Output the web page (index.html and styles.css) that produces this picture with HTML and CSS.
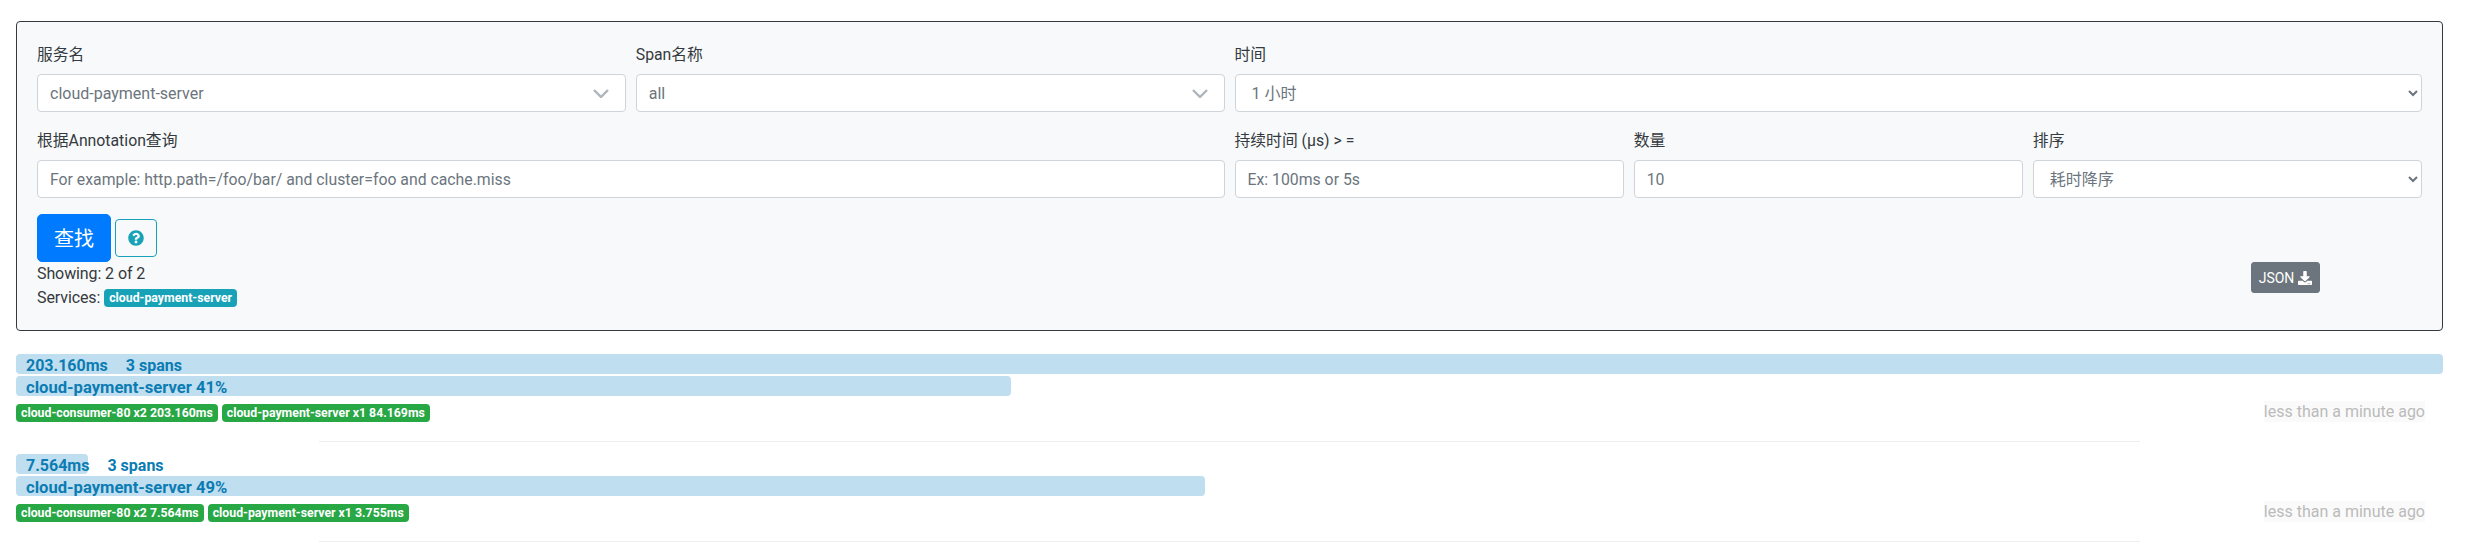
FILE: index.html
```html
<!DOCTYPE html>
<html lang="en">
<head>
	<meta charset="UTF-8">
	<title>Zipkin</title>
	<link rel="stylesheet" href="styles.css">
</head>
<body>
	<form class="panel">
		<div class="form-row">
			<div class="field span-3">
				<label>服务名</label>
				<div class="combo">
					<span>cloud-payment-server</span>
					<svg class="combo-arrow" viewBox="0 0 16 9"><path d="M1 1l7 7 7-7" /></svg>
				</div>
			</div>
			<div class="field span-3">
				<label>Span名称</label>
				<div class="combo">
					<span>all</span>
					<svg class="combo-arrow" viewBox="0 0 16 9"><path d="M1 1l7 7 7-7" /></svg>
				</div>
			</div>
			<div class="field span-6">
				<label>时间</label>
				<select class="control"><option>1 小时</option></select>
			</div>
		</div>
		<div class="form-row">
			<div class="field span-6">
				<label>根据Annotation查询</label>
				<input class="control" type="text" placeholder="For example: http.path=/foo/bar/ and cluster=foo and cache.miss">
			</div>
			<div class="field span-2">
				<label>持续时间 (μs) &gt; =</label>
				<input class="control" type="text" placeholder="Ex: 100ms or 5s">
			</div>
			<div class="field span-2">
				<label>数量</label>
				<input class="control" type="text" value="10">
			</div>
			<div class="field span-2">
				<label>排序</label>
				<select class="control"><option>耗时降序</option></select>
			</div>
		</div>
		<div class="actions">
			<button class="btn-search" type="button">查找</button>
			<button class="btn-help" type="button">
				<svg viewBox="0 0 512 512"><path d="M504 256c0 136.997-111.043 248-248 248S8 392.997 8 256C8 119.083 119.043 8 256 8s248 111.083 248 248zM262.655 90c-54.497 0-89.255 22.957-116.549 63.758-3.536 5.286-2.353 12.415 2.715 16.258l34.699 26.31c5.205 3.947 12.621 3.008 16.665-2.122 17.864-22.658 30.113-35.797 57.303-35.797 20.429 0 45.698 13.148 45.698 32.958 0 14.976-12.363 22.667-32.534 33.976C247.128 238.528 216 254.941 216 296v4c0 6.627 5.373 12 12 12h56c6.627 0 12-5.373 12-12v-1.333c0-28.462 83.186-29.647 83.186-106.667 0-58.002-60.165-102-116.531-102zM256 338c-25.365 0-46 20.635-46 46 0 25.364 20.635 46 46 46s46-20.636 46-46c0-25.365-20.635-46-46-46z" /></svg>
			</button>
		</div>
		<div class="summary">
			<div>
				<div class="summary-line">Showing: 2 of 2</div>
				<div class="summary-line">Services: <span class="badge badge-info">cloud-payment-server</span></div>
			</div>
			<button class="btn-json" type="button">JSON
				<svg viewBox="0 0 512 512"><path d="M216 0h80c13.3 0 24 10.7 24 24v168h87.7c17.8 0 26.7 21.5 14.1 34.1L269.7 378.3c-7.5 7.5-19.8 7.5-27.3 0L90.1 226.1c-12.6-12.6-3.7-34.1 14.1-34.1H192V24c0-13.3 10.7-24 24-24zm296 376v112c0 13.3-10.7 24-24 24H24c-13.3 0-24-10.7-24-24V376c0-13.3 10.7-24 24-24h146.7l49 49c20.1 20.1 52.5 20.1 72.6 0l49-49H488c13.3 0 24 10.7 24 24zm-124 88c0-11-9-20-20-20s-20 9-20 20 9 20 20 20 20-9 20-20zm64 0c0-11-9-20-20-20s-20 9-20 20 9 20 20 20 20-9 20-20z" /></svg>
			</button>
		</div>
	</form>

	<ul class="traces">
		<li class="trace">
			<div class="bar" style="width: 100%"><span class="bar-text"><span class="duration">203.160ms</span>3 spans</span></div>
			<div class="bar" style="width: 41%"><span class="bar-text bar-service">cloud-payment-server 41%</span></div>
			<div class="trace-foot">
				<div class="tags">
					<span class="badge badge-ok">cloud-consumer-80 x2 203.160ms</span>
					<span class="badge badge-ok">cloud-payment-server x1 84.169ms</span>
				</div>
				<span class="ago">less than a minute ago</span>
			</div>
		</li>
		<li class="trace">
			<div class="bar" style="width: 2.95%"><span class="bar-text"><span class="duration">7.564ms</span>3 spans</span></div>
			<div class="bar" style="width: 49%"><span class="bar-text bar-service">cloud-payment-server 49%</span></div>
			<div class="trace-foot">
				<div class="tags">
					<span class="badge badge-ok">cloud-consumer-80 x2 7.564ms</span>
					<span class="badge badge-ok">cloud-payment-server x1 3.755ms</span>
				</div>
				<span class="ago">less than a minute ago</span>
			</div>
		</li>
	</ul>
</body>
</html>
```

FILE: styles.css
```css
* {
	box-sizing: border-box;
	margin: 0;
	padding: 0;
	list-style: none;
}
body {
	padding: 21px 41px 0 16px;
	font-family: Roboto, "Noto Sans CJK SC", sans-serif;
	font-size: 16px;
	line-height: 24px;
	color: #343a40;
	background: #fff;
}
.panel {
	height: 310px;
	padding: 20px;
	background: #f8f9fa;
	border: 1px solid #343a40;
	border-radius: 4px;
}
.form-row {
	display: grid;
	grid-template-columns: repeat(12, 1fr);
	column-gap: 10px;
	margin-bottom: 16px;
}
.span-2 { grid-column: span 2; }
.span-3 { grid-column: span 3; }
.span-6 { grid-column: span 6; }
.field label {
	display: block;
	padding-top: 1px;
	margin-bottom: 7px;
	font-size: 15.8px;
}
.control,
.combo {
	display: block;
	width: 100%;
	height: 38px;
	padding: 6px 12px;
	font: inherit;
	color: #6c757d;
	background: #fff;
	border: 1px solid #ced4da;
	border-radius: 4px;
}
.control::placeholder {
	color: #6c757d;
}
input.control {
	font-size: 15.8px;
}
.combo {
	display: flex;
	align-items: center;
	justify-content: space-between;
	padding: 8px 16px 6px 12px;
}
.combo-arrow {
	width: 16px;
	height: 9px;
	margin-top: -2px;
	fill: none;
	stroke: #adb5bd;
	stroke-width: 2.4;
}
.actions {
	display: flex;
	align-items: center;
	gap: 4px;
}
.btn-search {
	width: 74px;
	height: 48px;
	padding-top: 2px;
	font: inherit;
	font-size: 20px;
	color: #fff;
	background: #007bff;
	border: 1px solid #007bff;
	border-radius: 5px;
}
.btn-help {
	display: flex;
	align-items: center;
	justify-content: center;
	width: 42px;
	height: 38px;
	background: transparent;
	border: 1px solid #17a2b8;
	border-radius: 4px;
}
.btn-help svg {
	width: 16px;
	height: 16px;
	fill: #17a2b8;
}
.summary {
	display: flex;
	justify-content: space-between;
	align-items: flex-start;
	padding-right: 102px;
}
.summary-line {
	letter-spacing: -0.1px;
}
.btn-json {
	display: flex;
	align-items: center;
	justify-content: center;
	gap: 4px;
	width: 69px;
	height: 31px;
	font: inherit;
	font-size: 14px;
	color: #fff;
	background: #6c757d;
	border: 1px solid #6c757d;
	border-radius: 3px;
}
.btn-json svg {
	width: 14px;
	height: 14px;
	fill: #fff;
}
.badge {
	display: inline-block;
	height: 18px;
	padding: 0 5px;
	font-size: 12.3px;
	font-weight: 700;
	line-height: 18px;
	letter-spacing: 0;
	color: #fff;
	border-radius: 4px;
	vertical-align: 1px;
	white-space: nowrap;
}
.badge-info { background: #17a2b8; }
.badge-ok { background: #28a745; }
.traces {
	margin-top: 23px;
}
.trace {
	position: relative;
	height: 100px;
	border: 0;
}
/* centred rule under each trace, three quarters of the row */
.trace::after {
	content: "";
	position: absolute;
	left: 12.5%;
	right: 12.5%;
	top: 87px;
	height: 1px;
	background: #eee;
}
.bar {
	height: 20px;
	margin-bottom: 2px;
	background: #bfdeef;
	border-radius: 4px;
	white-space: nowrap;
}
.bar-text {
	padding-left: 10px;
	font-size: 16px;
	font-weight: 700;
	line-height: 20px;
	color: #0b7cb3;
}
.bar-service {
	font-size: 16.6px;
}
.duration {
	margin-right: 18px;
}
.trace-foot {
	display: flex;
	justify-content: space-between;
	align-items: flex-start;
	padding-top: 6px;
	padding-right: 18px;
}
.tags {
	display: flex;
	gap: 4px;
}
.ago {
	margin-top: -3px;
	height: 21px;
	line-height: 21px;
	color: #bbb;
	background: #fafafa;
}
```
